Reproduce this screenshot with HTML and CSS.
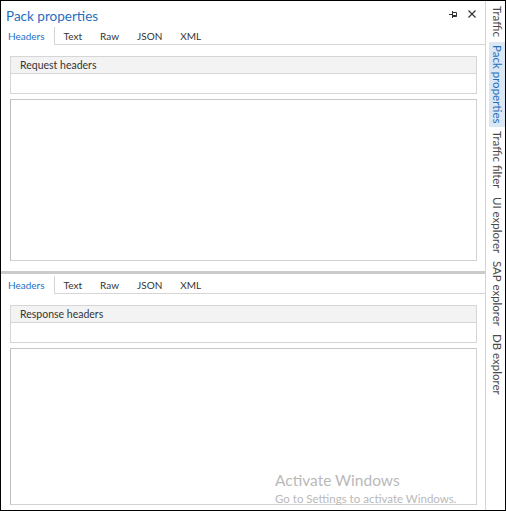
FILE: index.html
```html
<!DOCTYPE html>
<html>
<head>
<meta charset="utf-8">
<link rel="stylesheet" href="styles.css">
</head>
<body>
<div class="window">
  <div class="main">
    <section class="pane pane-top">
      <div class="titlebar">
        <span class="title">Pack properties</span>
        <span class="title-btns">
          <svg class="pin" width="9" height="8" viewBox="0 0 9 8"><path d="M0 4.5H3M3.5 1V8M3.5 2.5H7.5V6.5H3.5" fill="none" stroke="#333" stroke-width="1"/><rect x="3.5" y="5" width="4" height="1.5" fill="#333"/></svg>
          <svg class="close" width="8" height="8" viewBox="0 0 8 8"><path d="M0.5 0.5L7.5 7.5M7.5 0.5L0.5 7.5" stroke="#333" stroke-width="1.2"/></svg>
        </span>
      </div>
      <div class="tabs">
        <span class="tab active">Headers</span>
        <span class="tab">Text</span>
        <span class="tab">Raw</span>
        <span class="tab">JSON</span>
        <span class="tab">XML</span>
      </div>
      <div class="body">
        <div class="hdrbox">
          <div class="hdr">Request headers</div>
          <div class="hdr-row"></div>
        </div>
        <div class="content"></div>
      </div>
    </section>
    <div class="splitter"></div>
    <section class="pane pane-bottom">
      <div class="tabs">
        <span class="tab active">Headers</span>
        <span class="tab">Text</span>
        <span class="tab">Raw</span>
        <span class="tab">JSON</span>
        <span class="tab">XML</span>
      </div>
      <div class="body">
        <div class="hdrbox">
          <div class="hdr">Response headers</div>
          <div class="hdr-row"></div>
        </div>
        <div class="content"></div>
      </div>
    </section>
  </div>
  <div class="vsep"></div>
  <nav class="sidebar">
    <span class="vtab">Traffic</span>
    <span class="vtab active">Pack properties</span>
    <span class="vtab">Traffic filter</span>
    <span class="vtab">UI explorer</span>
    <span class="vtab">SAP explorer</span>
    <span class="vtab">DB explorer</span>
  </nav>
  <div class="watermark">
    <div class="wm-title">Activate Windows</div>
    <div class="wm-sub">Go to Settings to activate Windows.</div>
  </div>
</div>
</body>
</html>
```

FILE: styles.css
```css
* { box-sizing: border-box; }
html, body { margin: 0; padding: 0; background: #fff; }
body { font-family: "Lato", "Open Sans", sans-serif; color: #333; }

.window {
  position: relative;
  width: 506px;
  height: 511px;
  border: 1px solid #000;
  display: flex;
  overflow: hidden;
  background: #fff;
}

.main {
  width: 484px;
  display: flex;
  flex-direction: column;
}

.pane-top { height: 269px; display: flex; flex-direction: column; }
.pane-bottom { flex: 1; display: flex; flex-direction: column; }

.titlebar {
  height: 26px;
  display: flex;
  align-items: center;
  justify-content: space-between;
  padding: 0 0 0 5px;
}
.title {
  font-size: 13.5px;
  color: #1f6fbf;
  padding-top: 3px;
}
.title-btns {
  display: flex;
  align-items: center;
  gap: 10px;
  padding-right: 9px;
}

.tabs {
  height: 18px;
  border-bottom: 1px solid #d6d6d6;
  display: flex;
  font-size: 10px;
}
.tab {
  padding: 1px 9px 0 9px;
  line-height: 17px;
  color: #333;
}
.tab.active {
  color: #1f6fbf;
  background: #fff;
  border-right: 1px solid #d6d6d6;
  padding: 1px 9px 0 7px;
  height: 18px;
  margin-bottom: -1px;
}

.body {
  flex: 1;
  display: flex;
  flex-direction: column;
  padding: 11px 8px 9px 9px;
  gap: 5px;
}
.pane-bottom .body { padding-top: 11px; padding-bottom: 5px; }

.hdrbox {
  height: 38px;
  border: 1px solid #d6d6d6;
  display: flex;
  flex-direction: column;
}
.hdr {
  height: 17px;
  background: #f3f3f3;
  border-bottom: 1px solid #d6d6d6;
  font-size: 10.5px;
  line-height: 16px;
  padding-left: 9px;
  color: #333;
}
.hdr-row { flex: 1; }

.content {
  flex: 1;
  border: 1px solid #d2d2d2;
  border-left-color: #bdbdbd;
  border-top-color: #c6c6c6;
}
.pane-top .content { flex: none; height: 162px; }

.splitter {
  height: 6px;
  border-top: 1px solid #fff;
  border-bottom: 2px solid #fff;
  background: #cbcbcb;
}

.vsep { width: 1px; background: #d4d4d4; }

.sidebar {
  flex: 1;
  display: flex;
  flex-direction: column;
  align-items: stretch;
  padding: 2px 0 0 3px;
}
.vtab {
  writing-mode: vertical-rl;
  font-size: 11.5px;
  color: #4a4a4a;
  padding: 3px 0 4px 0;
  line-height: 16px;
  width: 16px;
  margin-bottom: 1px;
}
.vtab.active {
  color: #1f6fbf;
  background: #dce7f4;
}

.watermark {
  position: absolute;
  left: 274px;
  top: 470px;
  color: #b9b9b9;
  pointer-events: none;
}
.wm-title { font-size: 15.5px; line-height: 18px; }
.wm-sub { font-size: 11.5px; line-height: 14px; margin-top: 3px; }
```
